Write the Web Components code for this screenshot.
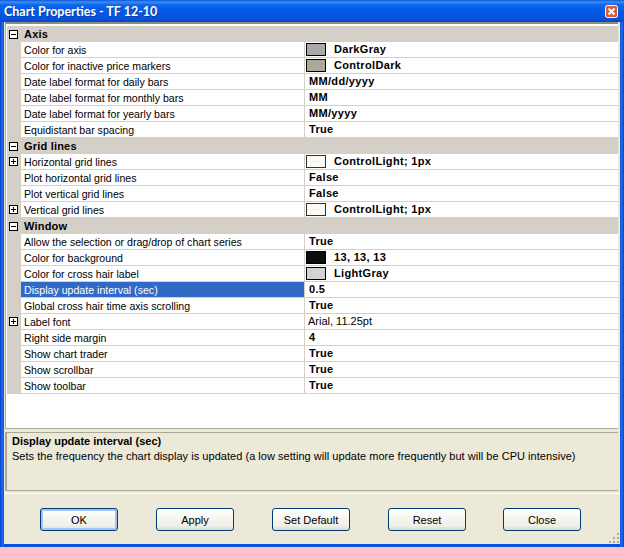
<!DOCTYPE html>
<html>
<head>
<meta charset="utf-8">
<title>Chart Properties</title>
<style>
    html, body { margin: 0; padding: 0; background: #ECE9D8; overflow: hidden; }
</style>
</head>
<body>
<x-dialog caption="Chart Properties - TF 12-10">
    <x-prop-grid>
        <x-prop-cat name="Axis"></x-prop-cat>
        <x-prop-row name="Color for axis" value="DarkGray" swatch="#A9A9A9"></x-prop-row>
        <x-prop-row name="Color for inactive price markers" value="ControlDark" swatch="#ACA899"></x-prop-row>
        <x-prop-row name="Date label format for daily bars" value="MM/dd/yyyy"></x-prop-row>
        <x-prop-row name="Date label format for monthly bars" value="MM"></x-prop-row>
        <x-prop-row name="Date label format for yearly bars" value="MM/yyyy"></x-prop-row>
        <x-prop-row name="Equidistant bar spacing" value="True"></x-prop-row>
        <x-prop-cat name="Grid lines"></x-prop-cat>
        <x-prop-row plus name="Horizontal grid lines" value="ControlLight; 1px" swatch="#FBFAF5" dotted></x-prop-row>
        <x-prop-row name="Plot horizontal grid lines" value="False"></x-prop-row>
        <x-prop-row name="Plot vertical grid lines" value="False"></x-prop-row>
        <x-prop-row plus name="Vertical grid lines" value="ControlLight; 1px" swatch="#FBFAF5" dotted></x-prop-row>
        <x-prop-cat name="Window"></x-prop-cat>
        <x-prop-row name="Allow the selection or drag/drop of chart series" value="True"></x-prop-row>
        <x-prop-row name="Color for background" value="13, 13, 13" swatch="#0D0D0D"></x-prop-row>
        <x-prop-row name="Color for cross hair label" value="LightGray" swatch="#D3D3D3"></x-prop-row>
        <x-prop-row selected name="Display update interval (sec)" value="0.5"></x-prop-row>
        <x-prop-row name="Global cross hair time axis scrolling" value="True"></x-prop-row>
        <x-prop-row plus plain name="Label font" value="Arial, 11.25pt"></x-prop-row>
        <x-prop-row name="Right side margin" value="4"></x-prop-row>
        <x-prop-row name="Show chart trader" value="True"></x-prop-row>
        <x-prop-row name="Show scrollbar" value="True"></x-prop-row>
        <x-prop-row name="Show toolbar" value="True"></x-prop-row>
    </x-prop-grid>
    <x-help-panel title-text="Display update interval (sec)">Sets the frequency the chart display is updated (a low setting will update more frequently but will be CPU intensive)</x-help-panel>
    <x-button-bar>
        <x-xp-button default>OK</x-xp-button>
        <x-xp-button>Apply</x-xp-button>
        <x-xp-button>Set Default</x-xp-button>
        <x-xp-button>Reset</x-xp-button>
        <x-xp-button style="margin-left: -1px">Close</x-xp-button>
    </x-button-bar>
</x-dialog>

<script>
const UI_FONT = `"Liberation Sans", Arial, sans-serif`;

class XDialog extends HTMLElement {
    constructor() {
        super();
        const shadow = this.attachShadow({mode: "open"});
        shadow.innerHTML = /*html*/`
            <style>
                :host {
                    display: flex;
                    flex-direction: column;
                    box-sizing: border-box;
                    width: 624px;
                    height: 547px;
                    font-family: ${UI_FONT};
                    font-size: 11px;
                    color: #000;
                    background: linear-gradient(90deg, #0A3AC8 0, #1C6EF0 2px, #0855DD 4px, #0855DD 620px, #1C6EF0 622px, #0A3AC8 624px);
                }
                .title {
                    flex: none;
                    height: 22px;
                    display: flex;
                    align-items: center;
                    justify-content: space-between;
                    padding: 0 6px 0 4px;
                    background: linear-gradient(180deg, #0A58D8 0, #3C8CF4 2px, #0A66EC 5px, #0458E4 12px, #0554E0 18px, #0A46C0 22px);
                }
                .caption {
                    font: bold 12.5px Lato, "Open Sans", sans-serif;
                    color: #fff;
                    text-shadow: 1px 1px 0 #0A3DA8;
                    white-space: nowrap;
                }
                .close {
                    display: block;
                    width: 13px;
                    height: 13px;
                }
                .frame {
                    flex: 1;
                    min-height: 0;
                    display: flex;
                    flex-direction: column;
                    margin: 0 4px 3px;
                    background: #ECE9D8;
                }
            </style>
            <div class="title">
                <span class="caption"></span>
                <svg class="close" viewBox="0 0 13 13">
                    <rect x=".5" y=".5" width="12" height="12" rx="2" fill="#DE5A38" stroke="#fff"/>
                    <path d="M3.5 3.5l6 6M9.5 3.5l-6 6" stroke="#fff" stroke-width="2" fill="none"/>
                </svg>
            </div>
            <div class="frame"><slot></slot></div>
        `;
        shadow.querySelector(".caption").textContent = this.getAttribute("caption");
    }
}

class XPropGrid extends HTMLElement {
    constructor() {
        super();
        const shadow = this.attachShadow({mode: "open"});
        shadow.innerHTML = /*html*/`
            <style>
                :host {
                    display: block;
                    box-sizing: border-box;
                    height: 407px;
                    margin: 0 2px 0 1px;
                    padding: 2px 0 0 1px;
                    background: #fff;
                    border-left: 1px solid #ACA899;
                    border-top: 2px solid #8F8C7E;
                    border-bottom: 1px solid #ACA899;
                }
                .rows { display: flex; flex-direction: column; }
            </style>
            <div class="rows"><slot></slot></div>
        `;
    }
}

// the +/- box in the grey margin
function expander(plus) {
    return `<svg width="9" height="9" viewBox="0 0 9 9" style="display:block">
        <rect x=".5" y=".5" width="8" height="8" fill="#fff" stroke="#000"/>
        <path d="M2 4.5h5${plus ? "M4.5 2v5" : ""}" stroke="#000" fill="none"/>
    </svg>`;
}

class XPropCat extends HTMLElement {
    constructor() {
        super();
        const shadow = this.attachShadow({mode: "open"});
        shadow.innerHTML = /*html*/`
            <style>
                :host {
                    display: flex;
                    align-items: center;
                    height: 16px;
                    background: #D4D0C8;
                    font-weight: bold;
                    letter-spacing: .2px;
                }
                .box { width: 14px; padding-left: 2px; box-sizing: border-box; }
                .name { padding-left: 3px; white-space: nowrap; }
            </style>
            <div class="box">${expander(false)}</div>
            <span class="name"></span>
        `;
        shadow.querySelector(".name").textContent = this.getAttribute("name");
    }
}

class XPropRow extends HTMLElement {
    constructor() {
        super();
        const shadow = this.attachShadow({mode: "open"});
        shadow.innerHTML = /*html*/`
            <style>
                :host {
                    display: grid;
                    grid-template-columns: 14px 284px 1fr;
                    height: 16px;
                    box-sizing: border-box;
                    background: #fff;
                }
                .margin {
                    background: #D4D0C8;
                    padding: 3px 0 0 2px;
                    box-sizing: border-box;
                }
                .name {
                    padding-left: 3px;
                    font-size: 10.6px;
                    line-height: 17px;
                    height: 15px;
                    border-bottom: 1px solid #D4D0C8;
                    border-right: 1px solid #D4D0C8;
                    white-space: nowrap;
                    overflow: hidden;
                }
                :host([selected]) .name {
                    background: #316AC5;
                    color: #fff;
                }
                .value {
                    display: flex;
                    align-items: flex-start;
                    gap: 8px;
                    padding-left: 4px;
                    line-height: 15px;
                    height: 15px;
                    border-bottom: 1px solid #D4D0C8;
                    font-weight: bold;
                    letter-spacing: .33px;
                    white-space: nowrap;
                }
                :host([plain]) .value { font-weight: normal; letter-spacing: 0; padding-left: 3px; }
                .value.has-swatch { padding-left: 1px; }
                .swatch {
                    width: 18px;
                    height: 11px;
                    margin-top: 1px;
                    border: 1px solid #000;
                    flex: none;
                }
                :host([dotted]) .swatch {
                    border-color: #333;
                    background-image: repeating-linear-gradient(90deg, #E4E1D2 0 1px, transparent 1px 3px);
                    background-size: 100% 1px;
                    background-position: 0 5px;
                    background-repeat: no-repeat;
                }
            </style>
            <div class="margin">${this.hasAttribute("plus") ? expander(true) : ""}</div>
            <div class="name"></div>
            <div class="value"><span class="text"></span></div>
        `;
        shadow.querySelector(".name").textContent = this.getAttribute("name");
        shadow.querySelector(".text").textContent = this.getAttribute("value");

        const swatchAttr = this.getAttribute("swatch");
        if (swatchAttr) {
            const value = shadow.querySelector(".value");
            const swatch = document.createElement("span");
            swatch.className = "swatch";
            swatch.style.backgroundColor = swatchAttr;
            value.classList.add("has-swatch");
            value.prepend(swatch);
        }
    }
}

class XHelpPanel extends HTMLElement {
    constructor() {
        super();
        const shadow = this.attachShadow({mode: "open"});
        shadow.innerHTML = /*html*/`
            <style>
                :host {
                    display: block;
                    box-sizing: border-box;
                    height: 59px;
                    margin: 3px 2px 0 1px;
                    padding: 1px 0 0 5px;
                    border: 1px solid #ACA899;
                    border-width: 1px 0 1px 2px;
                    white-space: nowrap;
                }
                .title { font-weight: bold; line-height: 14px; }
                .text { line-height: 17px; letter-spacing: .035px; }
            </style>
            <div class="title"></div>
            <div class="text"><slot></slot></div>
        `;
        shadow.querySelector(".title").textContent = this.getAttribute("title-text");
    }
}

class XButtonBar extends HTMLElement {
    constructor() {
        super();
        const shadow = this.attachShadow({mode: "open"});
        shadow.innerHTML = /*html*/`
            <style>
                :host {
                    display: flex;
                    gap: 38px;
                    margin-top: 2px;
                    border-top: 1px solid #fff;
                    padding: 14px 0 0 36px;
                    position: relative;
                    flex: 1;
                }
                svg { position: absolute; right: 0; bottom: 0; }
            </style>
            <slot></slot>
            <svg width="12" height="12" viewBox="0 0 12 12" fill="#ACA899">
                <rect x="9" y="1" width="2" height="2"/>
                <rect x="5" y="5" width="2" height="2"/><rect x="9" y="5" width="2" height="2"/>
                <rect x="1" y="9" width="2" height="2"/><rect x="5" y="9" width="2" height="2"/><rect x="9" y="9" width="2" height="2"/>
            </svg>
        `;
    }
}

class XXpButton extends HTMLElement {
    constructor() {
        super();
        const shadow = this.attachShadow({mode: "open"});
        shadow.innerHTML = /*html*/`
            <style>
                :host {
                    display: flex;
                    align-items: center;
                    justify-content: center;
                    box-sizing: border-box;
                    width: 78px;
                    height: 23px;
                    border: 1px solid #003C74;
                    border-radius: 3px;
                    background: linear-gradient(180deg, #fff 0, #F7F7F2 40%, #F0EFE8 80%, #DCD8CC 100%);
                    font-size: 11px;
                }
                :host([default]) {
                    box-shadow: inset 0 0 0 2px #A9C2EC;
                }
            </style>
            <slot></slot>
        `;
    }
}

customElements.define("x-dialog", XDialog);
customElements.define("x-prop-grid", XPropGrid);
customElements.define("x-prop-cat", XPropCat);
customElements.define("x-prop-row", XPropRow);
customElements.define("x-help-panel", XHelpPanel);
customElements.define("x-button-bar", XButtonBar);
customElements.define("x-xp-button", XXpButton);
</script>
</body>
</html>
